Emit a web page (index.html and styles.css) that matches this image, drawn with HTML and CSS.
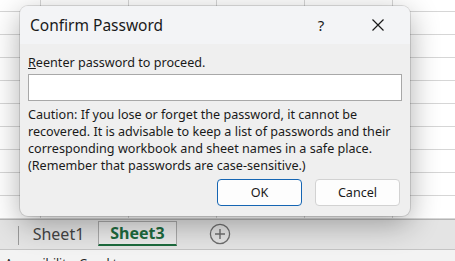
FILE: index.html
```html
<!DOCTYPE html>
<html>
<head>
<meta charset="utf-8">
<link rel="stylesheet" href="styles.css">
</head>
<body>
<div class="app">
  <div class="sheet"></div>
  <div class="tabbar">
    <span class="sep"></span>
    <span class="tab">Sheet1</span>
    <span class="tab active">Sheet3</span>
    <span class="add">
      <svg width="22" height="22" viewBox="0 0 22 22"><circle cx="11" cy="11" r="9.6" fill="none" stroke="#6e6e6e" stroke-width="1.3"/><path d="M11 6v10M6 11h10" stroke="#6e6e6e" stroke-width="1.4"/></svg>
    </span>
  </div>
  <div class="status">Accessibility: Good to go</div>

  <div class="dialog">
    <div class="titlebar">
      <span class="title">Confirm Password</span>
      <span class="help">?</span>
      <span class="close">
        <svg width="14" height="14" viewBox="0 0 14 14"><path d="M1.5 1.5l11 11M12.5 1.5l-11 11" stroke="#1a1a1a" stroke-width="1.2"/></svg>
      </span>
    </div>
    <div class="body">
      <div class="label"><u>R</u>eenter password to proceed.</div>
      <div class="input"></div>
      <p class="caution">Caution: If you lose or forget the password, it cannot be recovered. It is advisable to keep a list of passwords and their corresponding workbook and sheet names in a safe place. (Remember that passwords are case-sensitive.)</p>
      <div class="buttons">
        <button class="btn primary">OK</button>
        <button class="btn">Cancel</button>
      </div>
    </div>
  </div>
</div>
</body>
</html>
```
FILE: styles.css
```css
* { box-sizing: border-box; }
html, body { margin: 0; padding: 0; }
body {
  width: 455px;
  height: 261px;
  overflow: hidden;
  font-family: "Noto Sans", "Open Sans", sans-serif;
  background: #f3f3f3;
}
.app {
  position: relative;
  width: 455px;
  height: 261px;
  display: flex;
  flex-direction: column;
  overflow: hidden;
}
.sheet {
  flex: 0 0 219px;
  background-color: #ffffff;
  background-image:
    linear-gradient(to right, #d6d6d6 1px, transparent 1px),
    linear-gradient(to bottom, #d6d6d6 1px, transparent 1px);
  background-size: 88px 23px;
  background-position: 40px 11px;
}
.tabbar {
  flex: 0 0 30px;
  background: #e4e4e4;
  border-top: 1px solid #b4b4b4;
  border-bottom: 1px solid #c4c4c4;
  display: flex;
  align-items: stretch;
  padding-left: 18px;
}
.sep {
  width: 1px;
  background: #9a9a9a;
  margin: 6px 0 4px;
}
.tab {
  display: flex;
  align-items: center;
  justify-content: center;
  font-size: 16px;
  color: #444444;
  padding: 0 0 1px;
  width: 79px;
}
.tab.active {
  width: 79px;
  padding: 0;
  margin-top: 1px;
  margin-bottom: 3px;
  background: #eaeaea;
  border: 1px solid #a9a9a9;
  border-bottom: 2px solid #1d6b3e;
  color: #1d6b3e;
  font-weight: bold;
}
.add {
  display: flex;
  align-items: center;
  margin-left: 32px;
  padding-bottom: 2px;
}
.status {
  flex: 0 0 auto;
  background: #f3f3f3;
  font-size: 12px;
  line-height: 16px;
  padding: 6px 0 0 5px;
  color: #222;
  white-space: nowrap;
}
.dialog {
  position: absolute;
  left: 20px;
  top: 6px;
  width: 390px;
  height: 210px;
  border-radius: 8px;
  background: #efefef;
  box-shadow: 0 8px 30px rgba(0,0,0,0.32), 0 0 0 1px rgba(0,0,0,0.12);
  overflow: hidden;
  display: flex;
  flex-direction: column;
}
.titlebar {
  height: 38px;
  background: #f3f4f6;
  display: flex;
  align-items: center;
  padding-left: 10px;
}
.title {
  font-size: 15.5px;
  color: #1a1a1a;
  flex: 1;
}
.help {
  font-size: 15px;
  color: #1a1a1a;
  width: 14px;
  text-align: center;
  margin-right: 43px;
}
.close {
  display: flex;
  margin-right: 25px;
}
.body {
  flex: 1;
  padding: 10px 8px 10px 8px;
  display: flex;
  flex-direction: column;
}
.label {
  font-size: 12.6px;
  line-height: 17px;
  color: #1a1a1a;
}
.input {
  margin-top: 3px;
  height: 27px;
  background: #ffffff;
  border: 1px solid #a8a8a8;
}
.caution {
  margin: 5px 0 0;
  font-size: 12.6px;
  line-height: 17px;
  color: #1a1a1a;
}
.buttons {
  margin-top: auto;
  display: flex;
  justify-content: flex-end;
  gap: 13px;
  padding-right: 2px;
}
.btn {
  width: 85px;
  height: 27px;
  font-family: inherit;
  font-size: 12.6px;
  color: #1a1a1a;
  background: #fdfdfd;
  border: 1px solid #d2d2d2;
  border-radius: 4px;
  padding: 0;
}
.btn.primary {
  border: 1.5px solid #1565b3;
}
```
